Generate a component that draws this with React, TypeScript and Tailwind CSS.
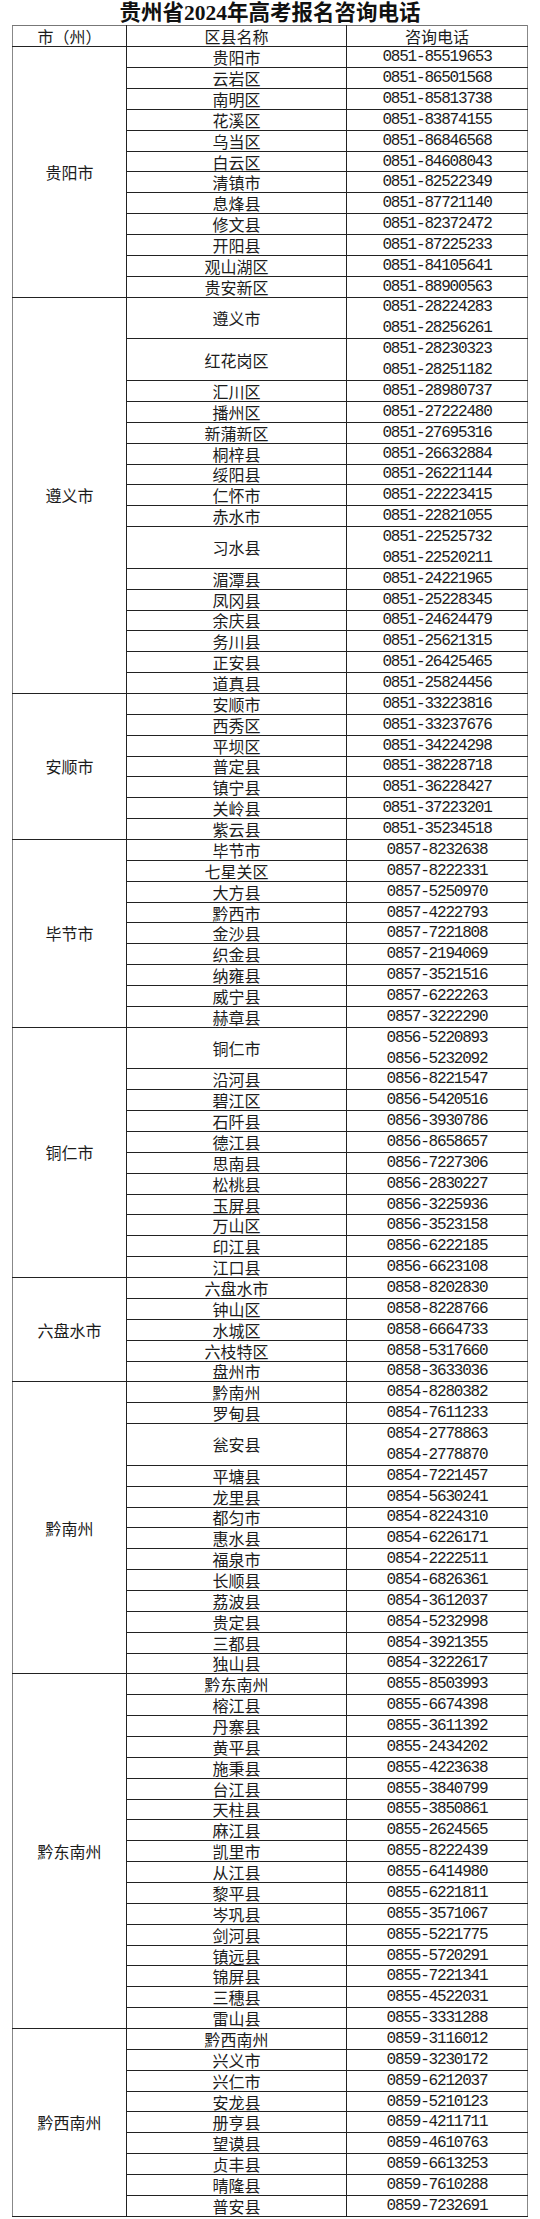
type Item = [string, ...string[]];

interface Group {
  city: string;
  items: Item[];
}

const groups: Group[] = [
  {
    city: '贵阳市',
    items: [
      ['贵阳市', '0851-85519653'],
      ['云岩区', '0851-86501568'],
      ['南明区', '0851-85813738'],
      ['花溪区', '0851-83874155'],
      ['乌当区', '0851-86846568'],
      ['白云区', '0851-84608043'],
      ['清镇市', '0851-82522349'],
      ['息烽县', '0851-87721140'],
      ['修文县', '0851-82372472'],
      ['开阳县', '0851-87225233'],
      ['观山湖区', '0851-84105641'],
      ['贵安新区', '0851-88900563'],
    ],
  },
  {
    city: '遵义市',
    items: [
      ['遵义市', '0851-28224283', '0851-28256261'],
      ['红花岗区', '0851-28230323', '0851-28251182'],
      ['汇川区', '0851-28980737'],
      ['播州区', '0851-27222480'],
      ['新蒲新区', '0851-27695316'],
      ['桐梓县', '0851-26632884'],
      ['绥阳县', '0851-26221144'],
      ['仁怀市', '0851-22223415'],
      ['赤水市', '0851-22821055'],
      ['习水县', '0851-22525732', '0851-22520211'],
      ['湄潭县', '0851-24221965'],
      ['凤冈县', '0851-25228345'],
      ['余庆县', '0851-24624479'],
      ['务川县', '0851-25621315'],
      ['正安县', '0851-26425465'],
      ['道真县', '0851-25824456'],
    ],
  },
  {
    city: '安顺市',
    items: [
      ['安顺市', '0851-33223816'],
      ['西秀区', '0851-33237676'],
      ['平坝区', '0851-34224298'],
      ['普定县', '0851-38228718'],
      ['镇宁县', '0851-36228427'],
      ['关岭县', '0851-37223201'],
      ['紫云县', '0851-35234518'],
    ],
  },
  {
    city: '毕节市',
    items: [
      ['毕节市', '0857-8232638'],
      ['七星关区', '0857-8222331'],
      ['大方县', '0857-5250970'],
      ['黔西市', '0857-4222793'],
      ['金沙县', '0857-7221808'],
      ['织金县', '0857-2194069'],
      ['纳雍县', '0857-3521516'],
      ['威宁县', '0857-6222263'],
      ['赫章县', '0857-3222290'],
    ],
  },
  {
    city: '铜仁市',
    items: [
      ['铜仁市', '0856-5220893', '0856-5232092'],
      ['沿河县', '0856-8221547'],
      ['碧江区', '0856-5420516'],
      ['石阡县', '0856-3930786'],
      ['德江县', '0856-8658657'],
      ['思南县', '0856-7227306'],
      ['松桃县', '0856-2830227'],
      ['玉屏县', '0856-3225936'],
      ['万山区', '0856-3523158'],
      ['印江县', '0856-6222185'],
      ['江口县', '0856-6623108'],
    ],
  },
  {
    city: '六盘水市',
    items: [
      ['六盘水市', '0858-8202830'],
      ['钟山区', '0858-8228766'],
      ['水城区', '0858-6664733'],
      ['六枝特区', '0858-5317660'],
      ['盘州市', '0858-3633036'],
    ],
  },
  {
    city: '黔南州',
    items: [
      ['黔南州', '0854-8280382'],
      ['罗甸县', '0854-7611233'],
      ['瓮安县', '0854-2778863', '0854-2778870'],
      ['平塘县', '0854-7221457'],
      ['龙里县', '0854-5630241'],
      ['都匀市', '0854-8224310'],
      ['惠水县', '0854-6226171'],
      ['福泉市', '0854-2222511'],
      ['长顺县', '0854-6826361'],
      ['荔波县', '0854-3612037'],
      ['贵定县', '0854-5232998'],
      ['三都县', '0854-3921355'],
      ['独山县', '0854-3222617'],
    ],
  },
  {
    city: '黔东南州',
    items: [
      ['黔东南州', '0855-8503993'],
      ['榕江县', '0855-6674398'],
      ['丹寨县', '0855-3611392'],
      ['黄平县', '0855-2434202'],
      ['施秉县', '0855-4223638'],
      ['台江县', '0855-3840799'],
      ['天柱县', '0855-3850861'],
      ['麻江县', '0855-2624565'],
      ['凯里市', '0855-8222439'],
      ['从江县', '0855-6414980'],
      ['黎平县', '0855-6221811'],
      ['岑巩县', '0855-3571067'],
      ['剑河县', '0855-5221775'],
      ['镇远县', '0855-5720291'],
      ['锦屏县', '0855-7221341'],
      ['三穗县', '0855-4522031'],
      ['雷山县', '0855-3331288'],
    ],
  },
  {
    city: '黔西南州',
    items: [
      ['黔西南州', '0859-3116012'],
      ['兴义市', '0859-3230172'],
      ['兴仁市', '0859-6212037'],
      ['安龙县', '0859-5210123'],
      ['册亨县', '0859-4211711'],
      ['望谟县', '0859-4610763'],
      ['贞丰县', '0859-6613253'],
      ['晴隆县', '0859-7610288'],
      ['普安县', '0859-7232691'],
    ],
  },
];

// shared cell look
const cell = 'border border-[#222] p-0 text-center align-middle';
const cjk = "font-['Noto_Sans_CJK_SC',sans-serif] text-[16px] leading-[18px]";
const phoneFont = "font-['Liberation_Mono',monospace] text-[16px] leading-[18px] tracking-[-1.2px]";

export default function App() {
  return (
    <div className="w-[540px] bg-white text-[#1c1c1c]">
      <h1 className="h-[25px] text-center font-['Liberation_Serif','Noto_Sans_CJK_SC',serif] text-[21.5px] font-bold leading-[26px] text-[#111]">
        贵州省2024年高考报名咨询电话
      </h1>

      <table className="ml-[12px] w-[515px] table-fixed border-collapse">
        <colgroup>
          <col className="w-[114px]" />
          <col className="w-[220px]" />
          <col className="w-[181px]" />
        </colgroup>
        <thead>
          <tr className="h-[21.3px]">
            <th className={`${cell} ${cjk} border-t-[#777] border-l-[#888] font-normal`}>市（州）</th>
            <th className={`${cell} ${cjk} border-t-[#777] font-normal`}>区县名称</th>
            <th className={`${cell} ${cjk} border-t-[#777] border-r-[#888] font-normal`}>咨询电话</th>
          </tr>
        </thead>
        <tbody>
          {groups.map(group =>
            group.items.map(([name, ...phones], i) => (
              <tr key={group.city + name} className={phones.length > 1 ? 'h-[41.74px]' : 'h-[20.87px]'}>
                {i === 0 && (
                  <td
                    rowSpan={group.items.length}
                    className={`${cell} ${cjk} border-l-[#888]`}
                  >
                    {group.city}
                  </td>
                )}
                <td className={`${cell} ${cjk}`}>{name}</td>
                <td className={`${cell} ${phoneFont} border-r-[#888]`}>
                  <div className="flex flex-col items-center gap-[3px]">
                    {phones.map(p => (
                      <span key={p}>{p}</span>
                    ))}
                  </div>
                </td>
              </tr>
            ))
          )}
        </tbody>
      </table>
    </div>
  );
}
